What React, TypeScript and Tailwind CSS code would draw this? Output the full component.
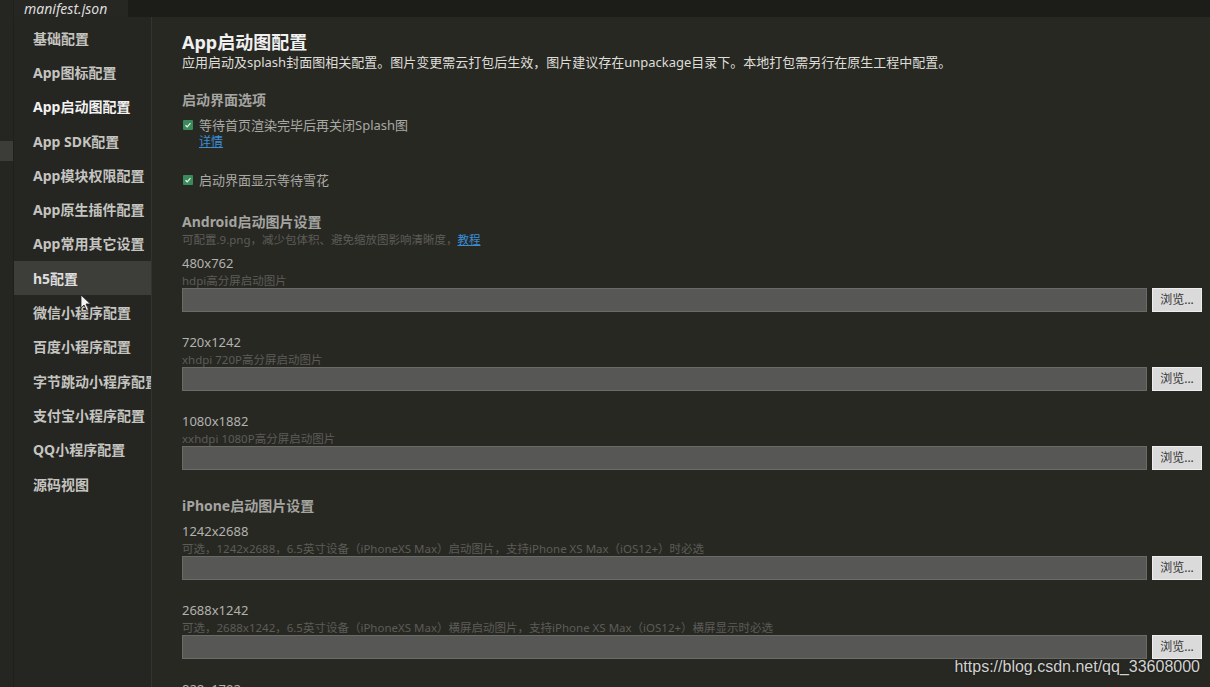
import React from "react";

const FONT = { fontFamily: '"Noto Sans", "Noto Sans CJK SC", sans-serif' };

const navItems = [
  "基础配置",
  "App图标配置",
  "App启动图配置",
  "App SDK配置",
  "App模块权限配置",
  "App原生插件配置",
  "App常用其它设置",
  "h5配置",
  "微信小程序配置",
  "百度小程序配置",
  "字节跳动小程序配置",
  "支付宝小程序配置",
  "QQ小程序配置",
  "源码视图",
];

function Check() {
  return (
    <span className="inline-flex h-[10px] w-[10px] shrink-0 items-center justify-center rounded-[1px] bg-[#3b8a5c]">
      <svg width="8" height="8" viewBox="0 0 8 8">
        <path d="M1.5 4.2 L3.2 5.8 L6.5 2.2" stroke="#e8f5ec" strokeWidth="1.2" fill="none" />
      </svg>
    </span>
  );
}

function FileRow({ label, desc, first }: { label: string; desc: string; first?: boolean }) {
  return (
    <div className={first ? "mt-[6px]" : "mt-[21px]"}>
      <div className="text-[13px] leading-[18px] text-[#b2b2ae]">{label}</div>
      <div className="mt-[2px] text-[11.5px] leading-[14px] text-[#5c5c58] whitespace-nowrap">{desc}</div>
      <div className="flex gap-[5px]">
        <div className="h-[24px] flex-1 border border-[#6a6a66] bg-[#575755]" />
        <button className="h-[24px] w-[50px] border border-[#eeeeee] bg-[#dadada] text-[12px] leading-[20px] text-[#333]">
          浏览...
        </button>
      </div>
    </div>
  );
}

export default function App() {
  return (
    <div className="relative flex h-[687px] w-[1210px] overflow-hidden bg-[#282823]" style={FONT}>
      {/* left strip */}
      <div className="relative w-[14px] shrink-0 border-r border-[#1f1f1b] bg-[#252521]">
        <div className="absolute left-0 top-[141px] h-[20px] w-[13px] bg-[#3c3c38]" />
      </div>

      <div className="flex min-w-0 flex-1 flex-col">
        {/* tab bar */}
        <div className="flex h-[17px] shrink-0 bg-[#1c1c19]">
          <div className="flex w-[114px] items-center bg-[#262622] pl-[10px] text-[14px] italic leading-[17px] text-[#dcdcdc]">
            manifest.json
          </div>
        </div>

        <div className="flex min-h-0 flex-1">
          {/* sidebar */}
          <div className="w-[138px] shrink-0 overflow-hidden border-r border-[#34342f] bg-[#252521] pt-[4px]">
            {navItems.map((t, i) => (
              <div
                key={t}
                className={
                  "flex h-[34.3px] items-center whitespace-nowrap pl-[19px] text-[14px] font-bold " +
                  (i === 7 ? "bg-[#3d3d39] text-[#dedede]" : i === 2 ? "text-[#f2f2f2]" : "text-[#c4c4c0]")
                }
              >
                {t}
              </div>
            ))}
          </div>

          {/* main */}
          <div className="min-w-0 flex-1 pl-[30px] pr-[8px] pt-[14px]">
            <div className="text-[18px] font-bold leading-[22px] text-[#f0f0f0]">App启动图配置</div>
            <div className="text-[13px] leading-[18px] text-[#deded8] whitespace-nowrap">
              应用启动及splash封面图相关配置。图片变更需云打包后生效，图片建议存在unpackage目录下。本地打包需另行在原生工程中配置。
            </div>

            <div className="mt-[19px] text-[14px] font-bold leading-[20px] text-[#a4a4a0]">启动界面选项</div>
            <div className="mt-[6px] flex items-center gap-[6px] pl-px text-[13px] leading-[18px] text-[#a8a8a4]">
              <Check />
              <span>等待首页渲染完毕后再关闭Splash图</span>
            </div>
            <div className="pl-[17px] text-[12px] leading-[16px] text-[#3a8ed8] underline">详情</div>
            <div className="mt-[21px] flex items-center gap-[6px] pl-px text-[13px] leading-[18px] text-[#a8a8a4]">
              <Check />
              <span>启动界面显示等待雪花</span>
            </div>

            <div className="mt-[23px] text-[14px] font-bold leading-[20px] text-[#a4a4a0]">Android启动图片设置</div>
            <div className="text-[11.5px] leading-[16px] text-[#5c5c58]">
              可配置.9.png，减少包体积、避免缩放图影响清晰度，
              <span className="text-[#3a8ed8] underline">教程</span>
            </div>
            <FileRow first label="480x762" desc="hdpi高分屏启动图片" />
            <FileRow label="720x1242" desc="xhdpi 720P高分屏启动图片" />
            <FileRow label="1080x1882" desc="xxhdpi 1080P高分屏启动图片" />

            <div className="mt-[26px] text-[14px] font-bold leading-[20px] text-[#a4a4a0]">iPhone启动图片设置</div>
            <FileRow
              first
              label="1242x2688"
              desc="可选，1242x2688，6.5英寸设备（iPhoneXS Max）启动图片，支持iPhone XS Max（iOS12+）时必选"
            />
            <FileRow
              label="2688x1242"
              desc="可选，2688x1242，6.5英寸设备（iPhoneXS Max）横屏启动图片，支持iPhone XS Max（iOS12+）横屏显示时必选"
            />
            <FileRow label="828x1792" desc="可选，828x1792，6.1英寸设备（iPhoneXR）启动图片" />
          </div>
        </div>
      </div>

      {/* cursor */}
      <svg className="absolute left-[80px] top-[294px]" width="12" height="18" viewBox="0 0 12 18">
        <path d="M1 1 L1 14 L4 11 L6.5 16.5 L8.5 15.5 L6 10 L10.5 10 Z" fill="#f4f4f4" stroke="#222" strokeWidth="0.8" />
      </svg>

      {/* watermark */}
      <div
        className="absolute right-[10px] top-[657px] text-[16px] leading-[20px] text-[#d2d2d2]"
        style={{ fontFamily: '"Liberation Sans", Arial, sans-serif', textShadow: "0 0 2px rgba(0,0,0,0.6)" }}
      >
        https://blog.csdn.net/qq_33608000
      </div>
    </div>
  );
}
